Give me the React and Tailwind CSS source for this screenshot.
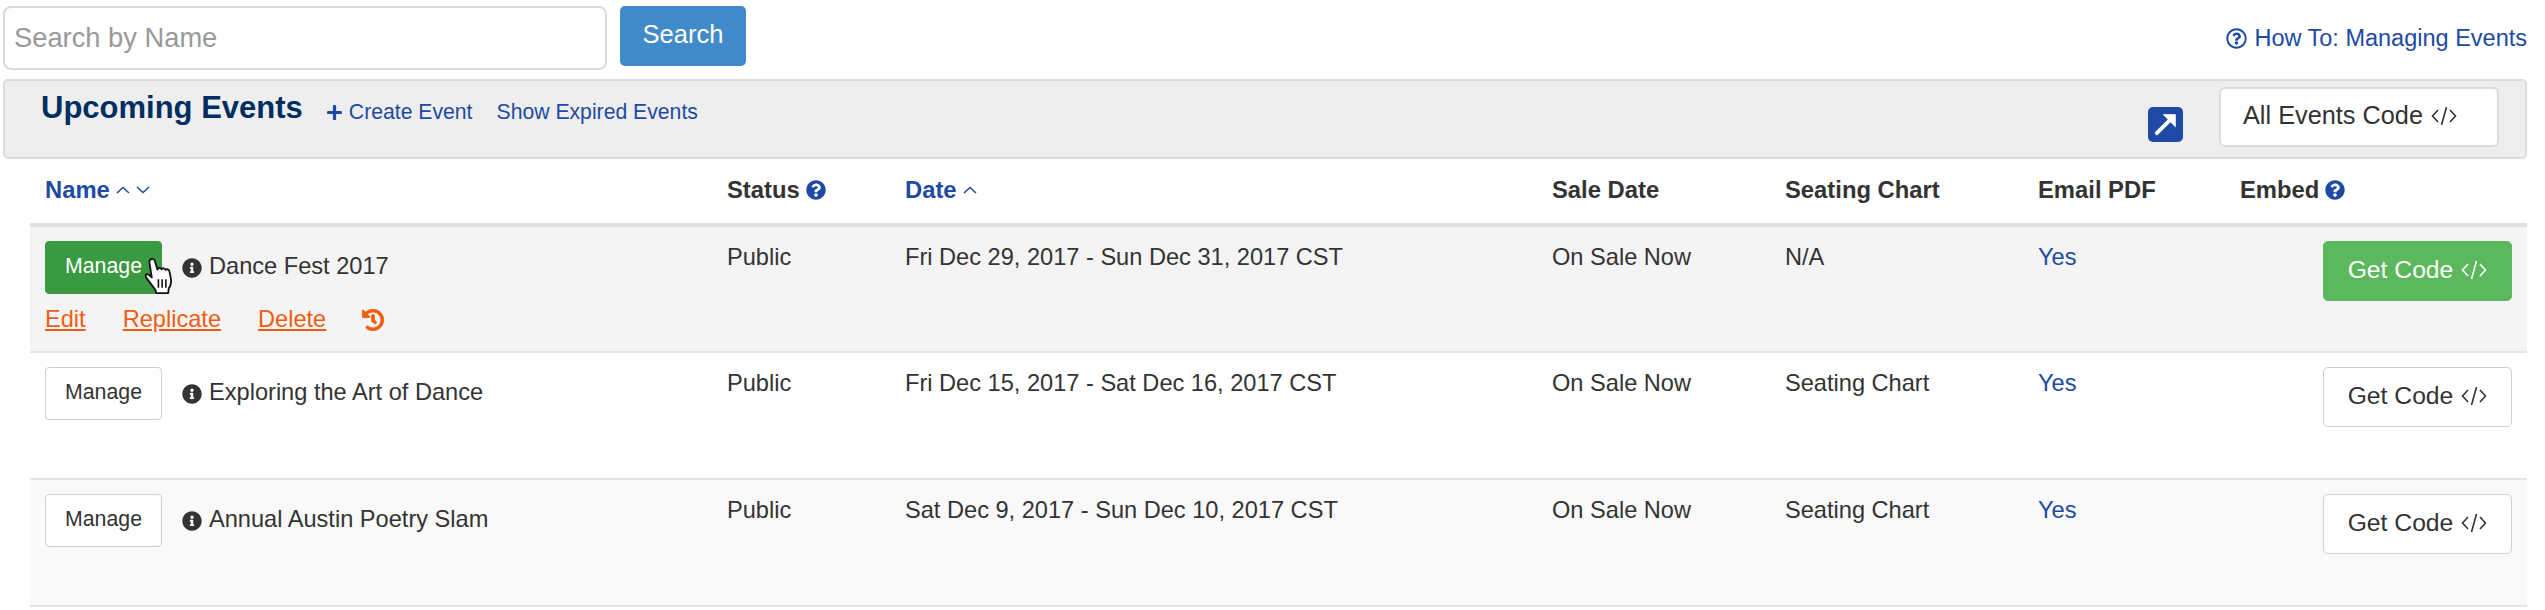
import React from "react";
import { FaInfoCircle, FaQuestionCircle, FaRegQuestionCircle, FaHistory, FaPlus } from "react-icons/fa";

const font = { fontFamily: '"Liberation Sans", Arial, sans-serif' };

function CodeIcon({ className }) {
  return (
    <svg className={className} viewBox="0 0 26 22" fill="none" stroke="currentColor" strokeWidth="1.6">
      <path d="M7 5 L1.5 11 L7 17" />
      <path d="M15.5 2 L10.5 20" />
      <path d="M19 5 L24.5 11 L19 17" />
    </svg>
  );
}

function Chevron({ up }) {
  return (
    <svg className="w-[14px] h-[8px]" viewBox="0 0 14 8" fill="none" stroke="currentColor" strokeWidth="1.5">
      <path d={up ? "M1 7 L7 1.500 L13 7" : "M1 1 L7 6.500 L13 1"} />
    </svg>
  );
}

function HandCursor() {
  return (
    <svg className="absolute left-[99px] top-[15px] w-[32px] h-[40px]" viewBox="0 0 30 36">
      <path
        d="M6 2.500c1.600-1.200 3.600-.4 4.200 1.400l2.400 8.100c.3-1.900 3.100-2.100 3.900-.2.6-1.500 3.200-1.400 3.800.5.900-1.100 3.100-.7 3.500 1.100l1.400 7c.7 3.700-.2 6.600-2 9.200l-.5 4.400H11.500l-1-3.400-6.700-8.700c-1.300-1.700-2.300-3.400-2.300-4.300 0-1.300 1.500-1.800 2.800-.8l3 2.500L5.100 5.600c-.3-1.200.1-2.400.9-3.100z"
        fill="#fff"
        stroke="#111"
        strokeWidth="1.700"
        strokeLinejoin="round"
      />
      <path d="M13.500 21v8M17 21v8M20.500 21v8" stroke="#111" strokeWidth="1.500" />
    </svg>
  );
}

const rows = [
  {
    name: "Dance Fest 2017",
    date: "Fri Dec 29, 2017 - Sun Dec 31, 2017 CST",
    chart: "N/A",
    bg: "bg-[#f4f4f4]",
    active: true,
  },
  {
    name: "Exploring the Art of Dance",
    date: "Fri Dec 15, 2017 - Sat Dec 16, 2017 CST",
    chart: "Seating Chart",
    bg: "bg-white",
  },
  {
    name: "Annual Austin Poetry Slam",
    date: "Sat Dec 9, 2017 - Sun Dec 10, 2017 CST",
    chart: "Seating Chart",
    bg: "bg-[#f9f9f9]",
  },
];

function EventRow({ row }) {
  return (
    <tr className={`${row.bg} border-b-2 border-[#e4e4e4] h-[127px] align-top`}>
      <td className="pl-[15px] pt-[14px]">
        <div className="relative flex items-center h-[53px]">
          <button
            className={`w-[117px] h-[53px] pb-[2px] rounded-[4px] text-[21.300px] border ${
              row.active ? "bg-[#3a9a41] border-[#3a9a41] text-white" : "bg-white border-[#cfcfcf] text-[#333]"
            }`}
          >
            Manage
          </button>
          {row.active && <HandCursor />}
          <FaInfoCircle className="ml-[20px] w-[20px] h-[20px] text-[#333]" />
          <span className="ml-[7px] text-[23.600px] leading-[30px] pb-[3px] text-[#333]">{row.name}</span>
        </div>
        {row.active && (
          <div className="flex items-center mt-[13px] text-[23.600px] text-[#f15c12] leading-[25px]">
            <a className="underline">Edit</a>
            <a className="underline ml-[37px]">Replicate</a>
            <a className="underline ml-[37px]">Delete</a>
            <FaHistory className="ml-[36px] w-[22px] h-[22px]" stroke="currentColor" strokeWidth="20" />
          </div>
        )}
      </td>
      <td className="pt-[15px] text-[23.600px] text-[#333] leading-[30px]">Public</td>
      <td className="pt-[15px] text-[23.600px] text-[#333] leading-[30px]">{row.date}</td>
      <td className="pt-[15px] text-[23.600px] text-[#333] leading-[30px]">On Sale Now</td>
      <td className="pt-[15px] text-[23.600px] text-[#333] leading-[30px]">{row.chart}</td>
      <td className="pt-[15px] text-[23.600px] text-[#1e4aa3] leading-[30px]">Yes</td>
      <td className="pt-[14px] pr-[15px]">
        <div className="flex justify-end">
          <button
            className={`w-[189px] h-[60px] pb-[2px] rounded-[5px] border text-[24.700px] flex items-center justify-center gap-[8px] ${
              row.active ? "bg-[#5cb85c] border-[#5cb85c] text-white" : "bg-white border-[#cfcfcf] text-[#333]"
            }`}
          >
            Get Code
            <CodeIcon className="w-[26px] h-[22px]" />
          </button>
        </div>
      </td>
    </tr>
  );
}

export default function App() {
  return (
    <div className="w-[2545px] h-[610px] bg-white overflow-hidden pl-[3px] pr-[18px] pt-[6px]" style={font}>
      <div className="flex items-start">
        <input
          placeholder="Search by Name"
          className="w-[604px] h-[64px] border-2 border-[#d9d9d9] rounded-[8px] px-[9px] text-[27.300px] text-[#333] placeholder:text-[#999] outline-none"
        />
        <button className="ml-[13px] w-[126px] h-[60px] pb-[3px] rounded-[5px] bg-[#428bca] text-white text-[25.500px]">Search</button>
        <a className="ml-auto mt-[17px] flex items-center text-[23.500px] leading-[30px] text-[#1e4aa3]">
          <FaRegQuestionCircle className="w-[21px] h-[21px] mr-[7px]" />
          How To: Managing Events
        </a>
      </div>

      <div className="mt-[9px] h-[80px] bg-[#eeeeee] border-2 border-[#dcdcdc] rounded-[5px] flex items-start pl-[36px] pr-[26px]">
        <h1 className="mt-[7px] text-[31px] leading-[40px] font-bold text-[#002e62]">Upcoming Events</h1>
        <a className="ml-[23px] mt-[17px] flex items-center text-[21.200px] leading-[28px] text-[#1e4aa3]">
          <FaPlus className="w-[17px] h-[17px] mr-[6px]" />
          Create Event
        </a>
        <a className="ml-[24px] mt-[17px] text-[21.200px] leading-[28px] text-[#1e4aa3]">Show Expired Events</a>
        <div className="ml-auto flex items-center mt-[6px]">
          <span className="w-[35px] h-[35px] rounded-[5px] bg-[#1e4aa3] flex items-center justify-center mt-[14px]">
            <svg viewBox="0 0 24 24" className="w-[26px] h-[26px]" fill="none" stroke="#fff" strokeWidth="3.6">
              <path d="M3.500 20.500 L17 7" strokeLinecap="round" />
              <path d="M10 3.500 H20.500 V14 Z" fill="#fff" strokeWidth="1" />
            </svg>
          </span>
          <button className="ml-[36px] w-[280px] h-[60px] pb-[3px] bg-white border-2 border-[#dcdcdc] rounded-[6px] text-[25.300px] text-[#333] flex items-center pl-[22px] gap-[8px]">
            All Events Code
            <CodeIcon className="w-[26px] h-[22px]" />
          </button>
        </div>
      </div>

      <table className="ml-[27px] w-[2497px] table-fixed border-collapse">
        <colgroup>
          <col className="w-[697px]" />
          <col className="w-[178px]" />
          <col className="w-[647px]" />
          <col className="w-[233px]" />
          <col className="w-[253px]" />
          <col className="w-[202px]" />
          <col className="w-[287px]" />
        </colgroup>
        <thead>
          <tr className="h-[66px] border-b-4 border-[#dfdfdf] text-[23.800px] font-bold text-[#333] text-left align-middle">
            <th className="pl-[15px] pb-[3px]">
              <span className="flex items-center gap-[6px] text-[#1e4aa3]">
                Name
                <Chevron up />
                <Chevron />
              </span>
            </th>
            <th className="pb-[3px]">
              <span className="flex items-center gap-[6px]">
                Status
                <FaQuestionCircle className="w-[20px] h-[20px] text-[#1e4aa3]" />
              </span>
            </th>
            <th className="pb-[3px]">
              <span className="flex items-center gap-[6px] text-[#1e4aa3]">
                Date
                <Chevron up />
              </span>
            </th>
            <th className="pb-[3px]">Sale Date</th>
            <th className="pb-[3px]">Seating Chart</th>
            <th className="pb-[3px]">Email PDF</th>
            <th className="pb-[3px]">
              <span className="flex items-center gap-[6px]">
                Embed
                <FaQuestionCircle className="w-[20px] h-[20px] text-[#1e4aa3]" />
              </span>
            </th>
          </tr>
        </thead>
        <tbody>
          {rows.map((row) => (
            <EventRow key={row.name} row={row} />
          ))}
        </tbody>
      </table>
    </div>
  );
}
